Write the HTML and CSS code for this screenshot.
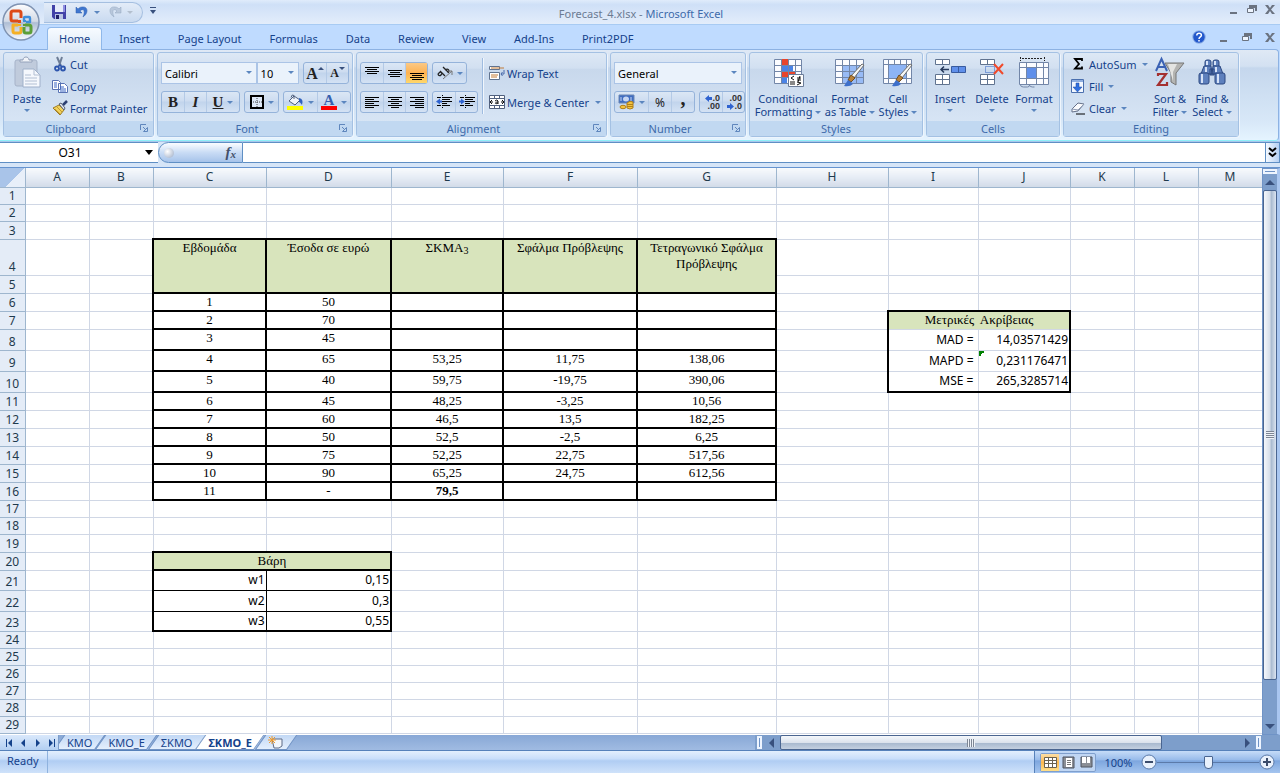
FILE: index.html
```html
<!DOCTYPE html>
<html lang="en">
<head>
    <meta charset="UTF-8">
    <meta name="viewport" content="width=device-width, initial-scale=1.0">
    <title>Forecast_4.xlsx - Microsoft Excel</title>
    <link rel="stylesheet" href="styles.css">
</head>
<body>
    <header class="titlebar">
        <button class="office-button" aria-label="Office Button">
            <svg width="38" height="38" viewBox="0 0 38 38">
                <defs>
                    <linearGradient id="orb" x1="0" y1="0" x2="0" y2="1">
                        <stop offset="0" stop-color="#fdfdfe"/><stop offset=".48" stop-color="#d3dae6"/>
                        <stop offset=".52" stop-color="#aebdd4"/><stop offset="1" stop-color="#f8fbff"/>
                    </linearGradient>
                </defs>
                <circle cx="19" cy="19" r="18" fill="url(#orb)" stroke="#7f93b2" stroke-width="1.5"/>
                <g fill="none" stroke-width="3" stroke-linejoin="round">
                    <path d="M16 18h-5q-2 0-2-2v-6q0-2 2-2h6q2 0 2 2v5" stroke="#dd4a17"/>
                    <path d="M22 18v-3q0-1 1-1h4q1 0 1 1v4h-4" stroke="#3f8edb" stroke-width="2.4"/>
                    <path d="M16 22h-5v6q0 2 2 2h4q2 0 2-2v-4" stroke="#f5b024"/>
                    <path d="M23 22h4q2 0 2 2v4q0 2-2 2h-3q-2 0-2-2v-4" stroke="#5c9f38"/>
                </g>
                <g><path fill="#dd4a17" d="M16 17h3v3h-3z"/><path fill="#3f8edb" d="M21 17h3v2h-3z"/><path fill="#f5b024" d="M16 21h3v2h-3z"/><path fill="#5c9f38" d="M21 21h3v2h-3z"/></g>
            </svg>
        </button>
        <div class="quick-access">
            <button aria-label="Save">
                <svg width="16" height="16" viewBox="0 0 16 16"><path d="M1 1h14v14H3l-2-2z" fill="#4242a8"/><path d="M4 1h8v7H4z" fill="#e6ecfa"/><path d="M12 1h2v7h-2z" fill="#8f8fe0"/><path d="M4 10h8v5H4z" fill="#b9c4e4"/><path d="M5 11h3v4H5z" fill="#22226a"/></svg>
            </button>
            <button aria-label="Undo">
                <svg width="14" height="14" viewBox="0 0 14 14"><path d="M1 2v6h6L5 6c3-3 6-1 3 6 6-4 5-11-1-10-2 0-3 1-4 2z" fill="#3f76cf" stroke="#2c5cad" stroke-width=".5"/></svg>
                <i class="arrow"></i>
            </button>
            <button aria-label="Redo">
                <svg width="14" height="14" viewBox="0 0 14 14"><path d="M13 2v6H7l2-2C6 3 3 5 6 12 0 8 1 1 7 2c2 0 3 1 4 2z" fill="#b9c8dc" stroke="#91a4be" stroke-width=".5"/></svg>
                <i class="arrow pale"></i>
            </button>
        </div>
        <button class="customize" aria-label="Customize Quick Access Toolbar"><i class="arrow dark"></i></button>
        <h1 class="title">Forecast_4.xlsx - <span>Microsoft Excel</span></h1>
        <div class="window-buttons">
            <button aria-label="Minimize"><svg width="11" height="11"><path d="M2 8h7v2H2z"/></svg></button>
            <button aria-label="Restore"><svg width="11" height="11"><path d="M3 1h8v6H9V4H3z"/><path d="M1.500 4.500h6v4h-6z" fill="#eef5ff" stroke="#6b7380"/></svg></button>
            <button aria-label="Close"><svg width="11" height="11"><path d="M1 1h3l2 3 2-3h3L7 5.500l4 4.500H8L6 7l-2 3H1l3.500-4.500z"/></svg></button>
        </div>
    </header>

    <nav class="ribbon-tabs">
        <a href="#home" class="ribbon-tab active">Home</a>
        <a href="#insert" class="ribbon-tab">Insert</a>
        <a href="#layout" class="ribbon-tab">Page Layout</a>
        <a href="#formulas" class="ribbon-tab">Formulas</a>
        <a href="#data" class="ribbon-tab">Data</a>
        <a href="#review" class="ribbon-tab">Review</a>
        <a href="#view" class="ribbon-tab">View</a>
        <a href="#addins" class="ribbon-tab">Add-Ins</a>
        <a href="#pdf" class="ribbon-tab">Print2PDF</a>
        <div class="window-buttons book-buttons">
            <button aria-label="Help"><svg width="14" height="14" viewBox="0 0 14 14"><circle cx="7" cy="7" r="6.300" fill="#2358cc" stroke="#9dbcea"/><path d="M4.800 5.500c0-3 4.600-2.800 4.600-.2C9.400 7 7 6.800 7 9M7 10v1.600" fill="none" stroke="#fff" stroke-width="1.500"/></svg></button>
            <button aria-label="Minimize workbook"><svg width="11" height="11"><path d="M2 8h7v2H2z"/></svg></button>
            <button aria-label="Restore workbook"><svg width="11" height="11"><path d="M3 1h8v6H9V4H3z"/><path d="M1.500 4.500h6v4h-6z" fill="#eef5ff" stroke="#6b7380"/></svg></button>
            <button aria-label="Close workbook"><svg width="11" height="11"><path d="M1 1h3l2 3 2-3h3L7 5.500l4 4.500H8L6 7l-2 3H1l3.500-4.500z"/></svg></button>
        </div>
    </nav>

    <section class="ribbon">
        <div class="group clipboard">
            <div class="group-body">
                <button class="big">
                    <svg width="28" height="32" viewBox="0 0 28 32"><rect x="2" y="4" width="22" height="26" rx="2" fill="#c0cbdc" stroke="#a6b3c9"/><path d="M7 6V4h3c0-4 6-4 6 0h3v2z" fill="#f0f3f8" stroke="#94a2ba"/><path d="M10 13h11l6 6v12H10z" fill="#f5f8fd" stroke="#9fb0ca"/><path d="M21 13v6h6M12 19h6m-6 3h12m-12 3h12m-12 3h12" fill="none" stroke="#b2bfd3"/></svg>
                    <span>Paste</span>
                    <i class="arrow"></i>
                </button>
                <div class="stack">
                    <button class="small"><svg width="16" height="16" viewBox="0 0 16 16"><path d="M5 1l4 9M10 1L7 10" stroke="#6d7d96" stroke-width="2"/><circle cx="5" cy="12.500" r="2" fill="none" stroke="#2d55ad" stroke-width="1.800"/><circle cx="11" cy="12.500" r="2" fill="none" stroke="#2d55ad" stroke-width="1.800"/><path d="M6 11l2-2 2 2" fill="none" stroke="#2d55ad" stroke-width="1.500"/></svg>Cut</button>
                    <button class="small"><svg width="16" height="16" viewBox="0 0 16 16"><path d="M.5 2.500h6l2 2v7h-8zM6.500 5.500h6l3 3v6h-9z" fill="#fff" stroke="#5873b4"/><path d="M2 5h3M2 7h3M2 9h3m3 0h4m-4 2h6m-6 2h6" stroke="#3b66c4"/></svg>Copy</button>
                    <button class="small"><svg width="16" height="16" viewBox="0 0 16 16"><path d="M1 8l6-3 5 5-4 5z" fill="#f2d35c" stroke="#9c7b24"/><path d="M3 9l5 5M5 7l5 5" stroke="#c29a33"/><path d="M7 4l2-1 4 5-1 2z" fill="#e8ecf4" stroke="#555f73"/><path d="M11 5l4-4" stroke="#2c3f71" stroke-width="2.500"/></svg>Format Painter</button>
                </div>
            </div>
            <div class="group-label">Clipboard<button class="launcher" aria-label="Clipboard options"><svg width="8" height="8"><path d="M.5 6V.5H6M3 3l3 3M7.500 3.500v4h-4z" fill="none" stroke="#5f86bd"/></svg></button></div>
        </div>

        <div class="group font">
            <div class="group-body rows">
                <div class="row">
                    <label class="combo font-name"><select aria-label="Font"><option>Calibri</option></select></label>
                    <label class="combo font-size"><select aria-label="Font size"><option>10</option></select></label>
                    <div class="buttons push">
                        <button aria-label="Grow font" class="serif grow">A<i class="arrow up"></i></button>
                        <button aria-label="Shrink font" class="serif shrink">A<i class="arrow dark"></i></button>
                    </div>
                </div>
                <div class="row">
                    <div class="buttons">
                        <button class="serif" aria-label="Bold"><b>B</b></button>
                        <button class="serif" aria-label="Italic"><em>I</em></button>
                        <button class="serif wide" aria-label="Underline"><u>U</u><i class="arrow"></i></button>
                    </div>
                    <div class="buttons">
                        <button class="wide" aria-label="Borders"><svg width="14" height="14"><path d="M1 1h12v12H1z" fill="#dfe9f8" stroke="#000" stroke-width="2"/><path d="M3 7h9M7 3v9" stroke="#444" stroke-dasharray="1 1"/></svg><i class="arrow"></i></button>
                    </div>
                    <div class="buttons push">
                        <button class="wide" aria-label="Fill color"><svg width="17" height="16" viewBox="0 0 17 16"><path d="M2 7l5-5 6 4-5 5z" fill="#f0f4fb" stroke="#50607e"/><path d="M7 5V1.500q-2-2-3 2" fill="none" stroke="#50607e"/><path d="M12 4q5 1 3 7-2-3-3-3z" fill="#2f61bd"/><path fill="#ff0" d="M0 12h16v4H0z"/></svg><i class="arrow"></i></button>
                        <button class="wide font-color serif" aria-label="Font color"><span>A</span><i class="arrow"></i></button>
                    </div>
                </div>
            </div>
            <div class="group-label">Font<button class="launcher" aria-label="Font options"><svg width="8" height="8"><path d="M.5 6V.5H6M3 3l3 3M7.500 3.500v4h-4z" fill="none" stroke="#5f86bd"/></svg></button></div>
        </div>

        <div class="group alignment">
            <div class="group-body">
                <div class="rows">
                    <div class="row">
                        <div class="buttons">
                            <button aria-label="Top align"><svg width="14" height="16"><path d="M0 2.500h14M2 4.500h10M0 6.500h14M2 8.500h10" stroke="#000"/></svg></button>
                            <button aria-label="Middle align"><svg width="14" height="16"><path d="M0 5.500h14M2 7.500h10M0 9.500h14M2 11.500h10" stroke="#000"/></svg></button>
                            <button class="on" aria-label="Bottom align"><svg width="14" height="16"><path d="M0 8.500h14M2 10.500h10M0 12.500h14M2 14.500h10" stroke="#000"/></svg></button>
                        </div>
                        <div class="buttons">
                            <button class="wide" aria-label="Orientation"><svg width="16" height="14" viewBox="0 0 16 14"><path d="M3 5l5 5M2 7c2-2 4 0 2 2s-4-1-2-2zM6 1l5 5M8 4c3-2 5 0 3 3" fill="none" stroke="#222" stroke-width="1.300"/><path d="M6 13l9-8m-4 0h4v4" fill="none" stroke="#777"/></svg><i class="arrow"></i></button>
                        </div>
                    </div>
                    <div class="row">
                        <div class="buttons">
                            <button aria-label="Align left"><svg width="14" height="13"><path d="M0 1.500h14M0 3.500h9M0 5.500h14M0 7.500h9M0 9.500h14M0 11.500h9" stroke="#000"/></svg></button>
                            <button aria-label="Center"><svg width="14" height="13"><path d="M0 1.500h14M3 3.500h8M0 5.500h14M3 7.500h8M0 9.500h14M3 11.500h8" stroke="#000"/></svg></button>
                            <button aria-label="Align right"><svg width="14" height="13"><path d="M0 1.500h14M5 3.500h9M0 5.500h14M5 7.500h9M0 9.500h14M5 11.500h9" stroke="#000"/></svg></button>
                        </div>
                        <div class="buttons">
                            <button aria-label="Decrease indent"><svg width="16" height="14"><path d="M1 2.500h4m2 0h9M7 4.500h7M7 6.500h9M7 8.500h4M1 10.500h4m2 0h7" stroke="#000"/><path d="M6.500 0v14" stroke="#000" stroke-dasharray="1 1"/><path d="M0 6.500l4-3v2h2v2H4v2z" fill="#2f63d0"/></svg></button>
                            <button aria-label="Increase indent"><svg width="16" height="14"><path d="M1 2.500h4m2 0h9M7 4.500h7M7 6.500h9M7 8.500h4M1 10.500h4m2 0h7" stroke="#000"/><path d="M6.500 0v14" stroke="#000" stroke-dasharray="1 1"/><path d="M6 6.500l-4-3v2H0v2h2v2z" fill="#2f63d0"/></svg></button>
                        </div>
                    </div>
                </div>
                <div class="divider"></div>
                <div class="rows">
                    <button class="small"><svg width="16" height="16" viewBox="0 0 16 16"><path d="M.5 1.500h10v3H.5zM.5 7.500h10v7H.5z" fill="#fff" stroke="#60738f"/><path d="M2 3h13M2 10h7M2 12h6" stroke="#c17a36"/><path d="M15 5v4h-3m1.500-2L12 9l1.500 2" fill="none" stroke="#4a6bab"/></svg>Wrap Text</button>
                    <button class="small"><svg width="16" height="16" viewBox="0 0 16 16"><path d="M.5 1.500h15v13H.5zM.5 4.500h15m-15 7h15M5.500 1v3m5-3v3m-5 7v3m5-3v3" fill="#fff" stroke="#50607e"/><path d="M1 8h3M12 8h3M3 6l-2 2 2 2M13 6l2 2-2 2M6 7q2-2 3 0v3M9 8c-4 0-3 3 0 1" fill="none" stroke="#111"/></svg>Merge &amp; Center<i class="arrow"></i></button>
                </div>
            </div>
            <div class="group-label">Alignment<button class="launcher" aria-label="Alignment options"><svg width="8" height="8"><path d="M.5 6V.5H6M3 3l3 3M7.500 3.500v4h-4z" fill="none" stroke="#5f86bd"/></svg></button></div>
        </div>

        <div class="group number">
            <div class="group-body rows">
                <div class="row">
                    <label class="combo format"><select aria-label="Number format"><option>General</option></select></label>
                </div>
                <div class="row">
                    <div class="buttons">
                        <button class="wide" aria-label="Accounting format"><svg width="17" height="16" viewBox="0 0 17 16"><path d="M1 1h15v8H1z" fill="#3f6cc0" stroke="#6a87b6"/><ellipse cx="8" cy="5" rx="3" ry="2.500" fill="#c6d6f2"/><path d="M3 3v4M13 3v4" stroke="#c6d6f2"/><path d="M9 9v5q3 2 6 0V8q-3-2-6 1z" fill="#f3c33c" stroke="#b1801b"/><path d="M9 10.500h6M9 12.500h6" stroke="#b1801b"/><ellipse cx="5" cy="13" rx="3" ry="1.700" fill="#f3c33c" stroke="#b1801b"/></svg><i class="arrow"></i></button>
                        <button aria-label="Percent style" class="sign">%</button>
                        <button aria-label="Comma style" class="serif sign"><b>,</b></button>
                    </div>
                    <div class="buttons push">
                        <button aria-label="Increase decimal" class="decimals"><span><svg width="7" height="7"><path d="M0 3.500L4 0v2h3v3H4v2z"/></svg>.0</span><span>.00</span></button>
                        <button aria-label="Decrease decimal" class="decimals"><span>.00</span><span><svg width="7" height="7"><path d="M7 3.500L3 0v2H0v3h3v2z"/></svg>.0</span></button>
                    </div>
                </div>
            </div>
            <div class="group-label">Number<button class="launcher" aria-label="Number options"><svg width="8" height="8"><path d="M.5 6V.5H6M3 3l3 3M7.500 3.500v4h-4z" fill="none" stroke="#5f86bd"/></svg></button></div>
        </div>

        <div class="group styles">
            <div class="group-body">
                <button class="big">
                    <svg width="32" height="32" viewBox="0 0 32 32"><path d="M2.500 3.500h27v24h-27z" fill="#fbfcff" stroke="#7286a8"/><path d="M9 3h7v6H9z" fill="#e8452c"/><path d="M9 9h12v6H9z" fill="#4a83e6"/><path d="M9 15h14v6H9z" fill="#e8452c"/><path d="M9 21h6v6H9z" fill="#4a83e6"/><path d="M2 9.500h27m-27 6h27m-27 6h27M9.500 3v24m7-24v24m7-24v24" stroke="#7286a8"/><path d="M16.500 18.500h15v12h-15z" fill="#fff" stroke="#6b7c98"/><path d="M22 20l-3 2 3 2M18 26h5m-5 2h5M25 22h4m-4 2h4m-1-4l-2 6M25 26l4 1-4 2" fill="none" stroke="#111"/></svg>
                    <span>Conditional<br>Formatting <i class="arrow"></i></span>
                </button>
                <button class="big">
                    <svg width="32" height="32" viewBox="0 0 32 32"><path d="M1.500 3.500h28v24h-28z" fill="#fbfcff" stroke="#7286a8"/><path d="M8 9h21v18H8z" fill="#98bbf6"/><path d="M1 9.500h28m-28 6h28m-28 6h28M8.500 3v24m7-24v24m7-24v24" stroke="#7286a8"/><path d="M30 9L20 22l-3-2L28 8z" fill="#f7f7f5" stroke="#6d6d6d"/><path d="M21 22l-4-3-3 5 3 2z" fill="#b98139" stroke="#704d20"/><path d="M17 26l-3-2-4 6q6 1 9-2z" fill="#3e6fca"/></svg>
                    <span>Format<br>as Table <i class="arrow"></i></span>
                </button>
                <button class="big">
                    <svg width="32" height="32" viewBox="0 0 32 32"><path d="M1.500 3.500h28v24h-28z" fill="#fbfcff" stroke="#7286a8"/><path d="M1 8.500h28m-28 14h28M6.500 3v24m18-24v24M12.500 3v5m6-5v5" stroke="#7286a8"/><path d="M7 9h17v13H7z" fill="#8db4f5"/><path d="M30 9L20 22l-3-2L28 8z" fill="#f7f7f5" stroke="#6d6d6d"/><path d="M21 22l-4-3-3 5 3 2z" fill="#b98139" stroke="#704d20"/><path d="M17 26l-3-2-4 6q6 1 9-2z" fill="#3e6fca"/></svg>
                    <span>Cell<br>Styles <i class="arrow"></i></span>
                </button>
            </div>
            <div class="group-label">Styles</div>
        </div>

        <div class="group cells">
            <div class="group-body">
                <button class="big">
                    <svg width="32" height="32" viewBox="0 0 32 32"><path d="M1.500 3.500h14v5h-14zM8.500 3v5M1.500 18.500h14v10h-14zM8.500 18v10M1 23.500h14" fill="#fff" stroke="#60738f"/><path d="M17.500 10.500h14v6h-14z" fill="#5f8fea" stroke="#385b9f"/><path d="M24.500 10v6" stroke="#385b9f"/><path d="M7 13.500h8M10 10.500l-3 3 3 3" fill="none" stroke="#26395c" stroke-width="1.500"/></svg>
                    <span>Insert</span><i class="arrow"></i>
                </button>
                <button class="big">
                    <svg width="32" height="32" viewBox="0 0 32 32"><path d="M4.500 3.500h14v5h-14zM11.500 3v5M4.500 18.500h14v10h-14zM11.500 18v10M4 23.500h14" fill="#fff" stroke="#60738f"/><path d="M9.500 10.500h9v6h-9z" fill="none" stroke="#2c5fc0" stroke-dasharray="1 1"/><path d="M18 8l9 10M27 8l-9 10" stroke="#f04a2b" stroke-width="2"/></svg>
                    <span>Delete</span><i class="arrow"></i>
                </button>
                <button class="big">
                    <svg width="32" height="32" viewBox="0 0 32 32"><path d="M1.500 6.500h29v22h-29z" fill="#fbfcff" stroke="#7286a8"/><path d="M9 12h9v10H9z" fill="#5f8fea"/><path d="M1 11.500h29m-29 11h29M8.500 6v22m10-22v22m7-22v22" stroke="#7286a8"/><path d="M2.500 29q0 2 3 2h4q2 0 2-2 0 2 3 2h2" fill="none" stroke="#7286a8"/><path d="M2.500 1v4m24-4v4M4 2.500h21" stroke="#222" stroke-dasharray="2 1"/></svg>
                    <span>Format</span><i class="arrow"></i>
                </button>
            </div>
            <div class="group-label">Cells</div>
        </div>

        <div class="group editing">
            <div class="group-body">
                <div class="stack">
                    <button class="small"><svg width="14" height="16" viewBox="0 0 14 16"><path d="M11 5V3H4l4 5-4 4.500h7v-2" fill="none" stroke="#000" stroke-width="1.800"/></svg>AutoSum <i class="arrow"></i></button>
                    <button class="small"><svg width="14" height="16" viewBox="0 0 14 16"><path d="M.5 1.500h12v13H.5z" fill="#f2f7ff" stroke="#4a6fae"/><path d="M1 2h11v2H1z" fill="#8eaee0"/><path d="M5 5h3v4h3l-4.500 5L2 9h3z" fill="#3070e0" stroke="#1c489f" stroke-width=".5"/></svg>Fill <i class="arrow"></i></button>
                    <button class="small"><svg width="14" height="16" viewBox="0 0 14 16"><path d="M1 9l6-6 6 1-6 7-6 1z" fill="#fafbfe" stroke="#65718a"/><path d="M1 9l6 1 6-6M7 10v1" fill="none" stroke="#8d9ab2"/><path d="M5 14h9" stroke="#000"/></svg>Clear <i class="arrow"></i></button>
                </div>
                <button class="big">
                    <svg width="32" height="32" viewBox="0 0 32 32"><path d="M2 15L7.500 3 13 15M4 11h7" fill="none" stroke="#3b62b4" stroke-width="2"/><path d="M4 20v-2h8L4 29h9v-3" fill="none" stroke="#a43030" stroke-width="2.200"/><path d="M11 7h19L22 17v12l-5-3v-9z" fill="#b4b4b2" stroke="#777"/><path d="M14 8h9l-4 8v9" fill="#e4e4e2"/></svg>
                    <span>Sort &amp;<br>Filter <i class="arrow"></i></span>
                </button>
                <button class="big">
                    <svg width="32" height="32" viewBox="0 0 32 32"><g fill="#5e80bd" stroke="#2c4881"><rect x="9" y="4" width="6" height="7" rx="2"/><rect x="17" y="4" width="6" height="7" rx="2"/><path d="M8 10h7l1 8H5zM17 10h7l3 8H16zM14 13h4v6h-4z"/><rect x="3" y="17" width="10" height="11" rx="2"/><rect x="19" y="17" width="10" height="11" rx="2"/></g><path d="M6 18v9M22 18v9M10 11v5M20 11v5M11 5v4M19 5v4" stroke="#d6e2f7" stroke-width="2"/></svg>
                    <span>Find &amp;<br>Select <i class="arrow"></i></span>
                </button>
            </div>
            <div class="group-label">Editing</div>
        </div>
    </section>

    <div class="formula-bar">
        <label class="name-box"><input type="text" value="O31" aria-label="Name Box"><i class="arrow black"></i></label>
        <div class="fx"><i class="knob"></i><button aria-label="Insert Function"><em>f</em><small>x</small></button></div>
        <input type="text" class="formula-input" aria-label="Formula">
        <button class="expand" aria-label="Expand Formula Bar"><svg width="9" height="12"><path d="M1 1l3.500 3L8 1M1 6l3.500 3L8 6" fill="none" stroke="#000" stroke-width="2"/></svg></button>
    </div>

    <main class="workbook">
        <div class="sheet">
            <table id="grid"></table>
        </div>
        <div class="v-scroll">
            <div class="v-split"></div>
            <button aria-label="Scroll up"><i class="arrow up"></i></button>
            <div class="v-thumb"><i class="grip"></i></div>
            <div class="track"></div>
            <button aria-label="Scroll down"><i class="arrow dark"></i></button>
        </div>
    </main>

    <div class="sheet-bar">
        <div class="sheet-nav">
            <button aria-label="First sheet"><svg width="7" height="8"><path d="M0 0h1v8H0zM6 0v8L2 4z"/></svg></button>
            <button aria-label="Previous sheet"><svg width="7" height="8"><path d="M5 0v8L1 4z"/></svg></button>
            <button aria-label="Next sheet"><svg width="7" height="8"><path d="M2 0v8l4-4z"/></svg></button>
            <button aria-label="Last sheet"><svg width="7" height="8"><path d="M6 0h1v8H6zM1 0v8l4-4z"/></svg></button>
        </div>
        <div class="sheet-tabs">
            <button class="sheet-tab"><span>KMO</span></button>
            <button class="sheet-tab"><span>KMO_E</span></button>
            <button class="sheet-tab"><span>ΣKMO</span></button>
            <button class="sheet-tab active"><span>ΣKMO_E</span></button>
            <button class="sheet-tab" aria-label="Insert Worksheet"><svg width="16" height="13" viewBox="0 0 16 13"><path d="M4 3h10v7l-3 2H6z" fill="#f3f6fb" stroke="#5c6b86"/><path d="M4 0v8M0 4h8M1 1l6 6M7 1L1 7" stroke="#f09a2a"/></svg></button>
        </div>
        <div class="h-scroll">
            <i class="h-split"></i>
            <button aria-label="Scroll left"><i class="arrow left"></i></button>
            <div class="h-thumb"><i class="grip"></i></div>
            <div class="track"></div>
            <button aria-label="Scroll right"><i class="arrow right"></i></button>
            <i class="h-split"></i>
        </div>
    </div>

    <footer class="status-bar">
        <span class="ready">Ready</span>
        <div class="status-right">
            <div class="views">
                <button class="on" aria-label="Normal view"><svg width="13" height="11"><path d="M.5.500h12v10H.5zM.5 3.500h12m-12 3h12M4.500 0v10m4-10v10" fill="#fff" stroke="#6a6250"/></svg></button>
                <button aria-label="Page layout view"><svg width="13" height="13"><path d="M1 1h11v11H1z" fill="#8b8f96" stroke="#4e5560"/><path d="M4 2h6v9H4z" fill="#fff"/><path d="M5 4.500h4m-4 2h4m-4 2h4" stroke="#777"/></svg></button>
                <button aria-label="Page break preview"><svg width="13" height="12"><path d="M1 1h11v10H1z" fill="#8b8f96" stroke="#4e5560"/><path d="M2 1h4v6H2zM7 1h3v6H7z" fill="#fff"/></svg></button>
            </div>
            <button class="zoom-level">100%</button>
            <button class="zoom-button" aria-label="Zoom out"><svg width="16" height="16"><circle cx="8" cy="8" r="7" fill="#e9f1fc" stroke="#5b7aa9"/><path d="M4 8h8" stroke="#3b4c6b" stroke-width="2"/></svg></button>
            <input type="range" class="zoom" min="10" max="190" value="100" aria-label="Zoom">
            <button class="zoom-button" aria-label="Zoom in"><svg width="16" height="16"><circle cx="8" cy="8" r="7" fill="#e9f1fc" stroke="#5b7aa9"/><path d="M4 8h8M8 4v8" stroke="#3b4c6b" stroke-width="2"/></svg></button>
        </div>
    </footer>

    <script>
        const columns = { A: 64, B: 64, C: 113, D: 125, E: 112, F: 134, G: 139, H: 112, I: 90, J: 92, K: 64, L: 64, M: 64 };
        const rowHeights = [17, 17, 18, 36, 18, 18, 18, 21, 21, 21, 18, 18, 18, 18, 18, 18, 17, 17, 18, 18, 20, 21, 20, 17, 17, 17, 17, 17, 17];

        // Cells with content: text, classes, and optional spans
        const cells = {
            C4: { html: 'Εβδομάδα', cls: 'boxed head', rows: 2 },
            D4: { html: 'Έσοδα σε ευρώ', cls: 'boxed head', rows: 2 },
            E4: { html: 'ΣΚΜΑ<sub>3</sub>', cls: 'boxed head', rows: 2 },
            F4: { html: 'Σφάλμα Πρόβλεψης', cls: 'boxed head', rows: 2 },
            G4: { html: 'Τετραγωνικό Σφάλμα Πρόβλεψης', cls: 'boxed head', rows: 2 },
            C20: { html: 'Βάρη', cls: 'boxed head', cols: 2 },
            C21: { html: 'w1', cls: 'weight first' },
            D21: { html: '0,15', cls: 'weight last' },
            C22: { html: 'w2', cls: 'weight first' },
            D22: { html: '0,3', cls: 'weight last' },
            C23: { html: 'w3', cls: 'weight first bottom' },
            D23: { html: '0,55', cls: 'weight last bottom' },
            I7: { html: 'Μετρικές&nbsp; Ακρίβειας', cls: 'metric head first last top', cols: 2 },
            I8: { html: 'MAD =', cls: 'metric first name' },
            J8: { html: '14,03571429', cls: 'metric last' },
            I9: { html: 'MAPD =', cls: 'metric first name' },
            J9: { html: '0,231176471', cls: 'metric last flagged' },
            I10: { html: 'MSE =', cls: 'metric first name bottom' },
            J10: { html: '265,3285714', cls: 'metric last bottom' }
        };

        const forecast = [
            ['1', '50', '', '', ''],
            ['2', '70', '', '', ''],
            ['3', '45', '', '', ''],
            ['4', '65', '53,25', '11,75', '138,06'],
            ['5', '40', '59,75', '-19,75', '390,06'],
            ['6', '45', '48,25', '-3,25', '10,56'],
            ['7', '60', '46,5', '13,5', '182,25'],
            ['8', '50', '52,5', '-2,5', '6,25'],
            ['9', '75', '52,25', '22,75', '517,56'],
            ['10', '90', '65,25', '24,75', '612,56'],
            ['11', '-', '<b>79,5</b>', '', '']
        ];
        forecast.forEach((values, r) => {
            values.forEach((value, c) => {
                cells['CDEFG'[c] + (r + 6)] = { html: value, cls: 'boxed' };
            });
        });

        // Cells hidden under a merged one
        const covered = ['C5', 'D5', 'E5', 'F5', 'G5', 'D20', 'J7'];

        const letters = Object.keys(columns);
        let html = '<colgroup><col style="width: 25px">';
        html += letters.map(l => `<col style="width: ${columns[l]}px">`).join('') + '</colgroup>';
        html += '<thead><tr><th class="corner"></th>' + letters.map(l => `<th>${l}</th>`).join('') + '</tr></thead><tbody>';
        rowHeights.forEach((height, i) => {
            html += `<tr style="height: ${height}px"><th>${i + 1}</th>`;
            letters.forEach(letter => {
                const id = letter + (i + 1);
                if (covered.includes(id)) return;
                const cell = cells[id];
                if (!cell) {
                    html += '<td></td>';
                    return;
                }
                html += `<td class="${cell.cls}" rowspan="${cell.rows || 1}" colspan="${cell.cols || 1}">${cell.html}</td>`;
            });
            html += '</tr>';
        });
        document.getElementById('grid').innerHTML = html + '</tbody>';
    </script>
</body>
</html>
```

FILE: styles.css
```css
* {
    box-sizing: border-box;
}
body {
    margin: 0;
    height: 100vh;
    display: flex;
    flex-direction: column;
    overflow: hidden;
    font-family: "Noto Sans", "Open Sans", sans-serif;
    font-size: 11px;
    line-height: 13px;
    color: #15428b;
    background: #bfdbff;
}
button, input, select {
    font: inherit;
    color: inherit;
    margin: 0;
    padding: 0;
    border: 0;
    background: none;
}
button {
    display: inline-flex;
    align-items: center;
    justify-content: center;
    white-space: nowrap;
}
svg {
    flex: none;
    display: block;
}

/* small triangles */
.arrow {
    display: inline-block;
    flex: none;
    width: 0;
    height: 0;
    border: 3px solid transparent;
    border-top-color: #5b86bf;
    border-bottom-width: 0;
    vertical-align: 2px;
}
.arrow.pale { border-top-color: #b3bfce; }
.arrow.dark { border-top-color: #38507d; }
.arrow.black { border-width: 5px 4px 0; border-top-color: #000; }
.arrow.up { border-width: 0 3px 3px; border-bottom-color: #38507d; }
.arrow.left { border-width: 5px 5px 5px 0; border-top-color: transparent; border-right-color: #38507d; }
.arrow.right { border-width: 5px 0 5px 5px; border-top-color: transparent; border-left-color: #38507d; }

/* title bar */
.titlebar {
    position: relative;
    flex: none;
    display: flex;
    align-items: center;
    height: 25px;
    padding-left: 44px;
    background: linear-gradient(#e0ecfb, #d3e3f8 14%, #cfe0f7 20%, #e3edfb);
    border-bottom: 1px solid #a8cbf3;
}
.office-button {
    position: absolute;
    left: 2px;
    top: 3px;
    z-index: 2;
}
.quick-access {
    display: flex;
    align-items: center;
    gap: 8px;
    height: 21px;
    padding: 0 9px 0 7px;
    border: 1px solid #a5bfe0;
    border-left: 0;
    border-radius: 0 11px 11px 0;
    background: linear-gradient(#e3ecf8, #c9daf0);
}
.quick-access button {
    gap: 5px;
}
.customize {
    width: 19px;
}
.customize .arrow {
    position: relative;
    border-width: 4px 3px 0;
}
.customize .arrow::before {
    content: "";
    position: absolute;
    left: -3px;
    top: -7px;
    width: 6px;
    height: 1px;
    background: #38507d;
}
.title {
    flex: 1;
    margin: 0;
    padding-top: 2px;
    padding-right: 108px;
    text-align: center;
    font-size: 11px;
    font-weight: normal;
    color: #6b7b92;
}
.title span {
    color: #3e6aaa;
}
.window-buttons {
    display: flex;
    gap: 7px;
    padding: 0 5px 6px 0;
}
.window-buttons svg {
    fill: #6b7380;
}

/* ribbon tabs */
.ribbon-tabs {
    flex: none;
    display: flex;
    gap: 6px;
    height: 24px;
    padding-left: 47px;
}
.ribbon-tab {
    padding: 7px 11px 0;
    color: #15428b;
    text-decoration: none;
    white-space: nowrap;
}
.ribbon-tab.active {
    position: relative;
    height: 23px;
    margin-top: 2px;
    padding-top: 4px;
    border: 1px solid #8fb8ea;
    border-bottom: 0;
    border-radius: 4px 4px 0 0;
    background: linear-gradient(#f7fbff, #dfeaf7);
}
.book-buttons {
    align-items: center;
    gap: 12px;
    margin-left: auto;
    padding: 0 5px 0 0;
}

/* ribbon */
.ribbon {
    flex: none;
    display: flex;
    gap: 3px;
    padding: 2px 3px 3px;
    border: 1px solid #8db2e3;
    border-width: 1px 1px 1px 0;
    border-bottom-color: #8ff0f8;
    border-radius: 0 4px 4px 0;
    background: linear-gradient(#dfe9f5, #d3e1f2 18%, #c5d7ed 20%, #d8e8f8 80%, #e5f4ff);
    margin-right: 1px;
}
.group {
    flex: none;
    height: 85px;
    display: flex;
    flex-direction: column;
    border: 1px solid #a4c1e3;
    border-radius: 3px;
    background: linear-gradient(#dde8f5, #d2e0f1 18%, #c8d8ec 20%, #dbe8f7);
    box-shadow: 1px 1px 0 #eef5fd;
}
.clipboard { width: 151px; }
.font { width: 196px; }
.alignment { width: 251px; }
.number { width: 136px; }
.styles { width: 174px; }
.cells { width: 134px; }
.editing { width: 176px; }
.group-body {
    flex: 1;
    display: flex;
    padding: 0 3px;
}
.group-label {
    position: relative;
    height: 15px;
    line-height: 15px;
    padding-right: 16px;
    text-align: center;
    color: #3e6aaa;
    background: #c1d8f1;
}
.styles .group-label, .cells .group-label, .editing .group-label {
    padding-right: 0;
}
.launcher {
    position: absolute;
    right: 5px;
    top: 3px;
}
.rows {
    display: flex;
    flex-direction: column;
    gap: 7px;
    padding-top: 9px;
}
.row {
    display: flex;
    gap: 4px;
}
.push {
    margin-left: auto;
}
.stack {
    display: flex;
    flex-direction: column;
}
.small {
    height: 22px;
    gap: 2px;
    justify-content: flex-start;
}
.small .arrow {
    margin-left: 4px;
}
.big {
    flex-direction: column;
    justify-content: flex-start;
    padding-top: 3px;
}
.big svg {
    margin-bottom: 4px;
}
.big > .arrow {
    margin-top: 4px;
}
.clipboard .big { width: 40px; }
.clipboard .stack { padding-left: 5px; }
.styles .group-body, .cells .group-body { padding: 0; }
.styles .big { width: 48px; }
.styles .big:first-child { width: 76px; }
.cells .group-body { padding-left: 2px; }
.cells .big { width: 42px; }
.editing .group-body { padding-left: 7px; }
.editing .stack { width: 78px; }
.editing .small { gap: 4px; }
.editing .small .arrow { margin-left: 1px; }
.editing .big { width: 42px; }

.buttons {
    display: flex;
    height: 22px;
    border: 1px solid #95b3da;
    border-radius: 3px;
    background: linear-gradient(#dbe7f5, #cddcf0 45%, #c1d4ec 50%, #d4e2f4);
}
.buttons button {
    width: 22px;
}
.buttons button + button {
    border-left: 1px solid #b4cae6;
}
.buttons button.wide {
    width: 33px;
    gap: 4px;
}
.buttons button.on {
    background: linear-gradient(#fbc986, #fdb252 50%, #ffd86b);
}
.buttons .serif {
    font-family: "Liberation Serif", serif;
    font-size: 15px;
    color: #222;
}
.buttons .serif em, .buttons .serif u {
    font-weight: bold;
}
.buttons .grow, .buttons .shrink {
    align-items: center;
    font-weight: bold;
}
.buttons .grow { font-size: 16px; }
.buttons .shrink { font-size: 12px; }
.grow .arrow, .shrink .arrow {
    align-self: flex-start;
    margin-top: 4px;
}
.buttons .font-color span {
    height: 16px;
    width: 16px;
    line-height: 12px;
    border-bottom: 4px solid #f00;
    color: #365fae;
    font-weight: bold;
}
.buttons .sign {
    width: 23px;
    font-size: 12px;
    color: #222;
}
.buttons .serif.sign {
    font-size: 20px;
    line-height: 8px;
    padding-bottom: 8px;
}
.buttons .decimals {
    flex-direction: column;
    align-items: flex-end;
    padding-right: 2px;
    font-family: "Liberation Sans", sans-serif;
    font-size: 9px;
    line-height: 8px;
    font-weight: bold;
    color: #333;
}
.decimals span {
    display: flex;
    align-items: center;
}
.decimals svg {
    fill: #2f63d0;
}

.combo {
    position: relative;
    height: 22px;
}
.combo::after {
    content: "";
    position: absolute;
    right: 5px;
    top: 9px;
    border: 3px solid transparent;
    border-top-color: #5b86bf;
    border-bottom: 0;
}
.combo select {
    appearance: none;
    width: 100%;
    height: 22px;
    padding-left: 3px;
    border: 1px solid #abc4e6;
    background: #eaf2fb;
    color: #000;
}
.font-name { width: 97px; }
.font-size { width: 43px; margin-left: -4px; }
.format { flex: 1; }
.divider {
    width: 2px;
    height: 56px;
    margin: 5px 5px 0 4px;
    background: #9fbce0;
    border-right: 1px solid #f0f6fd;
}

/* formula bar */
.formula-bar {
    flex: none;
    display: flex;
    height: 27px;
    padding-bottom: 4px;
    border-top: 1px solid #a9c7ec;
    border-bottom: 1px solid #6593cf;
    background: #d6e5f7;
}
.formula-bar > * {
    border: 1px solid #5f8fc4;
    border-width: 1px 0;
}
.name-box {
    display: flex;
    align-items: center;
    width: 158px;
    padding-right: 5px;
    background: #fff;
}
.name-box input {
    flex: 1;
    min-width: 0;
    padding-right: 5px;
    text-align: center;
    font-size: 12px;
    color: #000;
}
.fx {
    display: flex;
    justify-content: space-between;
    align-items: center;
    width: 85px;
    padding: 0 6px 0 5px;
    border-width: 1px;
    border-radius: 11px 0 0 11px;
    background: linear-gradient(#fbfdff, #c9dcf5 50%, #a6c3ea);
}
.knob {
    width: 10px;
    height: 10px;
    border-radius: 5px;
    background: radial-gradient(circle at 35% 35%, #fff, #9aaac4);
}
.fx button {
    font-family: "Liberation Serif", serif;
    font-size: 15px;
    font-weight: bold;
    color: #44506a;
}
.fx small {
    font-size: 11px;
    font-style: italic;
    padding-top: 4px;
}
.formula-input {
    flex: 1;
    background: #fff;
    color: #000;
}
.expand {
    width: 15px;
    border-width: 1px;
    background: linear-gradient(90deg, #f4f9ff, #b5d0f3);
}

/* sheet */
.workbook {
    flex: 1;
    min-height: 0;
    display: flex;
}
.sheet {
    flex: 1;
    min-width: 0;
    overflow: hidden;
    background: #fff;
}
#grid {
    table-layout: fixed;
    width: 1262px;
    border-collapse: collapse;
    color: #000;
    line-height: 16px;
}
#grid th {
    padding: 0;
    border: 1px solid #9eb6ce;
    font-size: 12px;
    font-weight: normal;
    color: #1f3a4d;
    background: #e4ecf7;
    vertical-align: bottom;
}
#grid thead th {
    height: 19px;
    border-top: 0;
    vertical-align: middle;
    background: linear-gradient(#f8fafc, #e6ecf5 50%, #d2dbe8);
}
#grid tr th:first-child {
    border-left: 0;
}
#grid thead .corner {
    background: linear-gradient(135deg, #a9c4e9 55%, #e8eff9 55%);
}
#grid td {
    padding: 0 1px;
    border: 1px solid #d0d7e5;
    font-family: "Liberation Serif", serif;
    font-size: 13px;
    text-align: center;
    vertical-align: top;
}
#grid td.boxed {
    border: 2px solid #000;
}
#grid td.head {
    background: #d8e4bc;
}
#grid sub {
    font-size: 10px;
    line-height: 10px;
    vertical-align: -2px;
}
#grid td.weight, #grid td.metric {
    text-align: right;
    vertical-align: middle;
    font-family: "Noto Sans", sans-serif;
    font-size: 12px;
}
#grid td.weight {
    border-color: #000;
}
#grid td.metric.head {
    text-align: center;
    font-family: "Liberation Serif", serif;
    font-size: 13px;
}
#grid td.name { padding-right: 4px; }
#grid td.first { border-left: 2px solid #000; }
#grid td.last { border-right: 2px solid #000; }
#grid td.top { border-top: 2px solid #000; }
#grid td.bottom { border-bottom: 2px solid #000; }
#grid td.flagged {
    background: linear-gradient(135deg, #008000 50%, transparent 50%) 0 0 / 6px 6px no-repeat;
}

/* scrollbars */
.v-scroll {
    flex: none;
    display: flex;
    flex-direction: column;
    width: 18px;
    border: 1px solid #6f93c6;
    border-right: 3px solid #a9c6f0;
    background: #7d9ecb;
}
.v-scroll button {
    height: 16px;
}
.v-scroll .arrow {
    border-left-width: 5px;
    border-right-width: 5px;
}
.v-scroll .arrow.up { border-bottom-width: 5px; }
.v-scroll .arrow.dark { border-top-width: 5px; }
.v-split {
    height: 5px;
    border: 2px solid #eef5ff;
    background: #6f93c6;
}
.v-thumb {
    flex: 13;
    display: flex;
    align-items: center;
    justify-content: center;
    border: 1px solid #4a6590;
    border-radius: 2px;
    background: linear-gradient(90deg, #f4f7fb, #d5dde9 50%, #a8b9cf 60%, #dbe4f0);
}
.grip {
    width: 8px;
    height: 8px;
    background: repeating-linear-gradient(#7d8694 0 1px, #eef2f8 1px 2px);
}
.track {
    flex: 1;
}
.h-scroll {
    flex: 0 0 41%;
    display: flex;
    align-items: stretch;
    padding: 0 19px 0 2px;
    background: #7d9ecb;
}
.h-scroll button {
    width: 18px;
}
.h-split {
    width: 5px;
    margin: 1px 0;
    border: 2px solid #eef5ff;
    background: #6f93c6;
}
.h-thumb {
    flex: 5;
    display: flex;
    align-items: center;
    justify-content: center;
    border: 1px solid #4a6590;
    border-radius: 2px;
    background: linear-gradient(#f4f7fb, #dce3ed 50%, #a8b9cf 55%, #c4d0e0);
}
.h-thumb .grip {
    background: repeating-linear-gradient(90deg, #7d8694 0 1px, #eef2f8 1px 2px);
}

/* sheet tabs */
.sheet-bar {
    flex: none;
    display: flex;
    height: 15px;
    background: linear-gradient(#88a8d6, #a0bbe2);
}
.sheet-nav {
    display: flex;
    width: 59px;
    padding-left: 2px;
    background: linear-gradient(#d9e8fb, #b3cff2);
    border-right: 1px solid #7d9ecb;
    z-index: 1;
}
.sheet-nav button {
    flex: 1;
}
.sheet-nav svg {
    fill: #15428b;
}
.sheet-tabs {
    flex: 1;
    display: flex;
}
.sheet-tab {
    position: relative;
    padding: 0 8px;
}
.sheet-tab::before {
    content: "";
    position: absolute;
    inset: 0;
    border: 1px solid #7193c4;
    border-top: 0;
    background: linear-gradient(#c2d8f5, #e4effd);
    transform: skewX(-35deg);
}
.sheet-tab > * {
    position: relative;
}
.sheet-tab.active {
    z-index: 1;
    font-weight: bold;
}
.sheet-tab.active::before {
    background: #fff;
}

/* status bar */
.status-bar {
    flex: none;
    display: flex;
    justify-content: space-between;
    height: 23px;
    border-top: 1px solid #5681ba;
    background: linear-gradient(#e3effd, #c9defa 35%, #b0cdf3 45%, #cfe2fa);
}
.ready {
    width: 48px;
    padding: 3px 0 0 7px;
    border-right: 1px solid #8fb2de;
}
.status-right {
    display: flex;
    align-items: center;
    width: 246px;
    padding: 0 5px;
    border-left: 1px solid #5681ba;
    background: linear-gradient(#c6dcf8, #98bbea 40%, #7da6de 45%, #a5c5ef);
}
.views {
    display: flex;
    height: 19px;
    border: 1px solid #7f9fcd;
    border-radius: 2px;
    background: #c0d6f3;
}
.views button {
    width: 18px;
}
.views button.on {
    background: linear-gradient(#fde0a8, #fdb84e 50%, #ffe08a);
}
.zoom-level {
    flex: 1;
}
.zoom {
    appearance: none;
    width: 102px;
    height: 16px;
    background: linear-gradient(#5b7aa9, #5b7aa9) center / 100% 1px no-repeat;
}
.zoom::-webkit-slider-thumb {
    appearance: none;
    width: 9px;
    height: 13px;
    border: 1px solid #4a6590;
    border-radius: 1px 1px 4px 4px;
    background: #e9f1fc;
}
```
